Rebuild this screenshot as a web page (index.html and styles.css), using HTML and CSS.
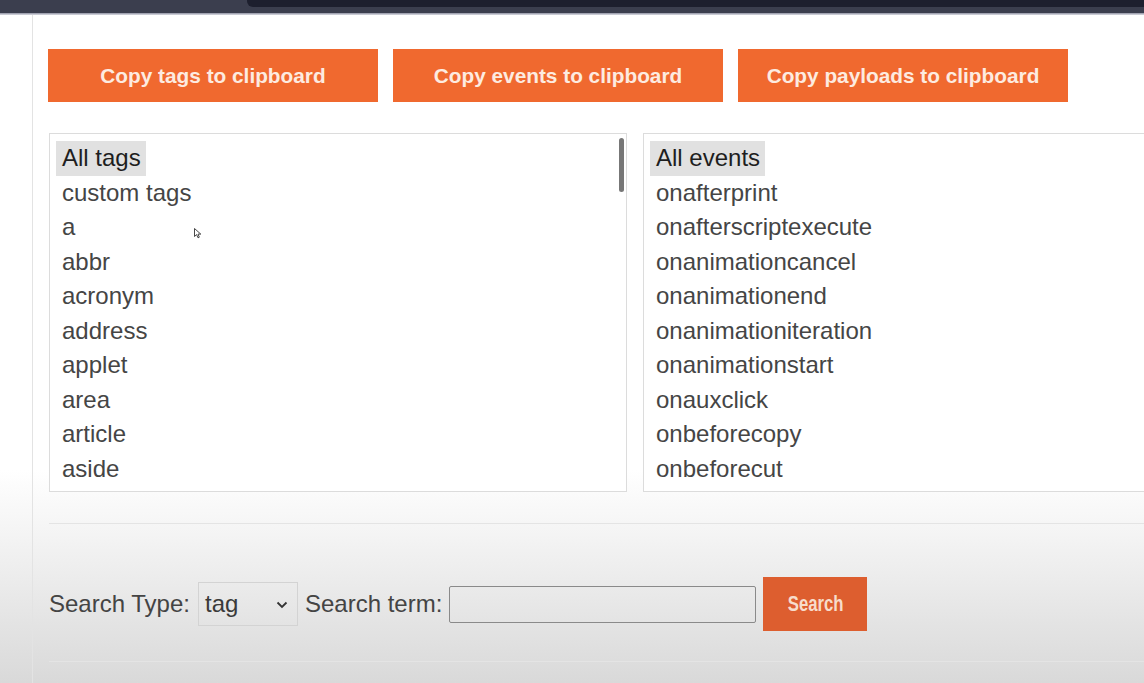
FILE: index.html
```html
<!DOCTYPE html>
<html>
<head>
<meta charset="utf-8">
<title>XSS cheat sheet</title>
<link rel="stylesheet" href="styles.css">
</head>
<body>
<div class="topbar"><div class="topbar-left"></div><div class="topbar-tab"></div></div>
<div class="topline"></div>
<div class="page">
  <div class="gutter"></div>
  <main class="main">
    <div class="btnrow">
      <button class="btn">Copy tags to clipboard</button>
      <button class="btn">Copy events to clipboard</button>
      <button class="btn">Copy payloads to clipboard</button>
    </div>
    <div class="listrow">
      <div class="listbox">
        <div class="item selected">All tags</div>
        <div class="item">custom tags</div>
        <div class="item">a</div>
        <div class="item">abbr</div>
        <div class="item">acronym</div>
        <div class="item">address</div>
        <div class="item">applet</div>
        <div class="item">area</div>
        <div class="item">article</div>
        <div class="item">aside</div>
        <div class="thumb"></div>
        <svg class="cursor" width="8" height="11" viewBox="0 0 8 11"><path d="M0.5 0.5 L0.5 8.5 L2.6 6.6 L4 9.8 L5.3 9.2 L4 6.1 L6.8 6.1 Z" fill="#fff" stroke="#333" stroke-width="0.9"/></svg>
      </div>
      <div class="listbox wide">
        <div class="item selected">All events</div>
        <div class="item">onafterprint</div>
        <div class="item">onafterscriptexecute</div>
        <div class="item">onanimationcancel</div>
        <div class="item">onanimationend</div>
        <div class="item">onanimationiteration</div>
        <div class="item">onanimationstart</div>
        <div class="item">onauxclick</div>
        <div class="item">onbeforecopy</div>
        <div class="item">onbeforecut</div>
      </div>
    </div>
    <div class="divider"></div>
    <div class="searchrow">
      <span class="label">Search Type:</span>
      <div class="select"><span>tag</span><svg width="12" height="8" viewBox="0 0 12 8"><polyline points="1.5,1.5 6,6 10.5,1.5" fill="none" stroke="#333" stroke-width="1.8"/></svg></div>
      <span class="label">Search term:</span>
      <input class="term" type="text">
      <button class="searchbtn"><span>Search</span></button>
    </div>
    <div class="divider"></div>
  </main>
</div>
</body>
</html>
```
FILE: styles.css
```css
html, body {
  margin: 0;
  height: 100%;
}
body {
  font-family: "Liberation Sans", Arial, sans-serif;
  overflow: hidden;
  background: linear-gradient(to bottom, #ffffff 0, #ffffff 470px, #f3f3f3 540px, #e6e6e6 610px, #d9d9d9 683px);
}
.topbar {
  height: 13px;
  background: #3b3e4e;
  display: flex;
  align-items: flex-start;
}
.topbar-left {
  width: 247px;
  flex: none;
}
.topbar-tab {
  flex: 1;
  height: 7px;
  background: #1d1f2e;
  border-bottom-left-radius: 6px;
}
.topline {
  height: 2px;
  background: linear-gradient(to bottom, #8f91a2, #dcdde4);
}
.page {
  display: flex;
  height: calc(100% - 15px);
}
.gutter {
  width: 32px;
  flex: none;
  border-right: 1px solid #e3e3e3;
}
.main {
  flex: 1;
  padding: 34px 0 0 15px;
  overflow: hidden;
  min-width: 0;
}
.btnrow {
  display: flex;
  gap: 15px;
}
.btn {
  width: 330px;
  height: 53px;
  flex: none;
  border: none;
  background: #f0692f;
  color: #fdebe0;
  font-family: "Liberation Sans", Arial, sans-serif;
  font-weight: bold;
  font-size: 20.8px;
  padding: 0;
}
.listrow {
  display: flex;
  gap: 16px;
  margin-top: 31px;
  padding-left: 1px;
}
.listbox {
  position: relative;
  width: 578px;
  height: 359px;
  flex: none;
  box-sizing: border-box;
  border: 1px solid #dcdcdc;
  background: #fff;
  padding: 7px 6px 0 6px;
  overflow: hidden;
}
.listbox.wide {
  width: 620px;
}
.item {
  width: fit-content;
  padding: 0 5px 0 6px;
  font-size: 24px;
  line-height: 34.5px;
  color: #454545;
  white-space: nowrap;
}
.item.selected {
  background: #e1e1e1;
  color: #1e1e1e;
}
.thumb {
  position: absolute;
  left: 569px;
  top: 4px;
  width: 5px;
  height: 54px;
  border-radius: 3px;
  background: #777;
}
.cursor {
  position: absolute;
  left: 144px;
  top: 94px;
}
.divider {
  height: 1px;
  background: #e4e4e4;
  margin-left: 1px;
}
.listrow + .divider {
  margin-top: 31px;
}
.searchrow {
  display: flex;
  align-items: center;
  height: 54px;
  margin: 53px 0 30px 1px;
}
.label {
  font-size: 24px;
  color: #444;
  white-space: nowrap;
}
.select {
  width: 100px;
  height: 44px;
  box-sizing: border-box;
  border: 1px solid #d3d3d3;
  margin: 0 7px 0 8px;
  display: flex;
  align-items: center;
  justify-content: space-between;
  padding: 0 9px 0 6px;
  font-size: 24px;
  color: #3a3a3a;
}
.select svg {
  margin-top: 2px;
}
.term {
  width: 307px;
  height: 37px;
  box-sizing: border-box;
  border: 1px solid #8a8a8a;
  border-radius: 2px;
  background: transparent;
  margin: 0 7px 0 7px;
  padding: 0;
}
.searchbtn {
  width: 104px;
  height: 54px;
  border: none;
  padding: 0;
  background: #dd5e2f;
  color: #f7dccb;
  font-family: "Liberation Sans", Arial, sans-serif;
  font-weight: bold;
  font-size: 22px;
}
.searchbtn span {
  display: inline-block;
  transform: scaleX(0.76);
}
```
